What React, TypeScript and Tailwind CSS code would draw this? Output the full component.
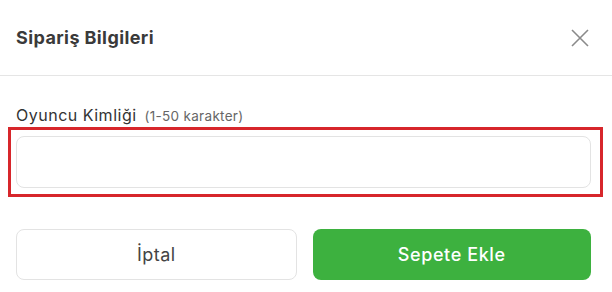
import React from "react";

export default function App() {
  return (
    <div className="relative w-[612px] h-[292px] bg-white overflow-hidden" style={{ fontFamily: "Inter, 'Noto Sans', sans-serif" }}>
      <div className="flex items-center justify-between h-[76px] pl-4 pr-[23px] border-b border-[#e5e5e5]">
        <h2 className="text-[18px] font-bold text-[#3a3a3a] tracking-[0.4px]">Sipariş Bilgileri</h2>
        <svg width="18" height="18" viewBox="0 0 18 18">
          <path d="M1 1L17 17M17 1L1 17" stroke="#8a8a8a" strokeWidth="1.6" />
        </svg>
      </div>
      <div className="pl-4 pr-[21px] pt-[27px]">
        <div className="flex items-baseline gap-[8px] text-[#333] h-[22px]">
          <span className="text-[16px] tracking-[0.5px]">Oyuncu Kimliği</span>
          <span className="text-[13.5px] text-[#666] tracking-[0.3px]">(1-50 karakter)</span>
        </div>
        <input className="mt-[11px] w-full h-[52px] rounded-[8px] border border-[#e3e3e3] outline-none px-3" />
        <div className="flex gap-4 mt-[41px]">
          <button className="flex-1 h-[51px] rounded-[8px] border border-[#e3e3e3] bg-white text-[18px] text-[#444] tracking-[0.4px]">İptal</button>
          <button className="flex-1 h-[51px] rounded-[8px] bg-[#3db13f] text-[18px] font-medium text-white tracking-[0.6px]">Sepete Ekle</button>
        </div>
      </div>
      <div className="absolute left-[8px] top-[127px] w-[595px] h-[70px] border-[3px] border-[#d7262b] pointer-events-none" />
    </div>
  );
}
